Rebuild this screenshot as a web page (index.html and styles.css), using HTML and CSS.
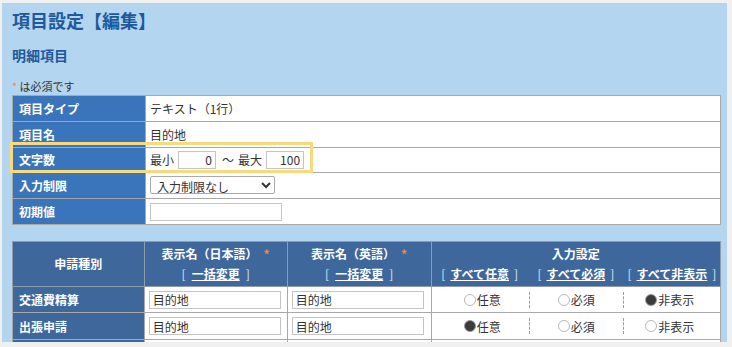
FILE: index.html
```html
<!DOCTYPE html>
<html lang="ja">
<head>
    <meta charset="UTF-8">
    <title>項目設定【編集】</title>
    <link rel="stylesheet" href="styles.css">
</head>
<body>
    <div class="page">
        <h1>項目設定【編集】</h1>
        <h2>明細項目</h2>
        <p class="note"><span class="req">*</span> は必須です</p>

        <div class="detail-wrap">
            <table class="detail">
                <tr>
                    <th>項目タイプ</th>
                    <td>テキスト（1行）</td>
                </tr>
                <tr>
                    <th>項目名</th>
                    <td>目的地</td>
                </tr>
                <tr>
                    <th>文字数</th>
                    <td>
                        <div class="range">
                            <span>最小</span>
                            <input type="text" class="num" value="0">
                            <span>〜</span>
                            <span>最大</span>
                            <input type="text" class="num" value="100">
                        </div>
                    </td>
                </tr>
                <tr>
                    <th>入力制限</th>
                    <td>
                        <select class="limit">
                            <option>入力制限なし</option>
                        </select>
                    </td>
                </tr>
                <tr>
                    <th>初期値</th>
                    <td><input type="text" class="text-field"></td>
                </tr>
            </table>
            <span class="highlight"></span>
        </div>

        <table class="apply">
            <colgroup>
                <col class="c-kind">
                <col class="c-ja">
                <col class="c-en">
                <col class="c-set">
            </colgroup>
            <thead>
                <tr>
                    <th class="center">申請種別</th>
                    <th class="center">
                        <div>表示名（日本語）<span class="req">*</span></div>
                        <div class="bulk">[<a href="#">一括変更</a>]</div>
                    </th>
                    <th class="center">
                        <div>表示名（英語）<span class="req">*</span></div>
                        <div class="bulk">[<a href="#">一括変更</a>]</div>
                    </th>
                    <th class="center">
                        <div>入力設定</div>
                        <div class="bulk-row">
                            <span class="bulk">[<a href="#">すべて任意</a>]</span>
                            <span class="bulk">[<a href="#">すべて必須</a>]</span>
                            <span class="bulk">[<a href="#">すべて非表示</a>]</span>
                        </div>
                    </th>
                </tr>
            </thead>
            <tbody>
                <tr>
                    <th>交通費精算</th>
                    <td><input type="text" class="name-field" value="目的地"></td>
                    <td><input type="text" class="name-field" value="目的地"></td>
                    <td>
                        <div class="radios">
                            <label><input type="radio" name="r1">任意</label>
                            <label><input type="radio" name="r1">必須</label>
                            <label><input type="radio" name="r1" checked>非表示</label>
                        </div>
                    </td>
                </tr>
                <tr>
                    <th>出張申請</th>
                    <td><input type="text" class="name-field" value="目的地"></td>
                    <td><input type="text" class="name-field" value="目的地"></td>
                    <td>
                        <div class="radios">
                            <label><input type="radio" name="r2" checked>任意</label>
                            <label><input type="radio" name="r2">必須</label>
                            <label><input type="radio" name="r2">非表示</label>
                        </div>
                    </td>
                </tr>
                <tr class="more">
                    <th></th>
                    <td></td>
                    <td></td>
                    <td></td>
                </tr>
            </tbody>
        </table>
    </div>
</body>
</html>
```

FILE: styles.css
```css
html, body {
    margin: 0;
    padding: 0;
}
body {
    background-color: #f0f0f0;
    font-family: "Noto Sans CJK JP", "Noto Sans", sans-serif;
    font-size: 12px;
    color: #333;
    overflow: hidden;
}
.page {
    margin: 3px 5px 0 2px;
    height: 339px;
    padding: 0 6px 0 10px;
    background-color: #b4d5ef;
    overflow: hidden;
}
h1 {
    margin: 0;
    padding-top: 5px;
    font-size: 18px;
    line-height: 24px;
    color: #1d5a9d;
}
h2 {
    margin: 13px 0 0;
    font-size: 14px;
    line-height: 20px;
    color: #1d5a9d;
}
.note {
    margin: 14px 0 0;
    font-size: 11px;
    line-height: 14px;
    color: #333;
}
.req {
    color: #f08a3c;
    margin-left: 6px;
}
.note .req {
    margin: 0;
}

/* top table */
.detail-wrap {
    position: relative;
    margin-top: 2px;
}
table {
    border-collapse: collapse;
    width: 709px;
    background-color: #fff;
}
.detail th, .detail td {
    border: 1px solid #a8a8a8;
    height: 24.8px;
    padding: 0;
    text-align: left;
}
.detail th {
    width: 126px;
    padding-left: 6px;
    background-color: #3a75bc;
    color: #fff;
    font-weight: bold;
}
.detail td {
    padding-left: 4px;
}
.range {
    display: flex;
    align-items: center;
    gap: 4px;
}
.range .num {
    width: 38px;
    margin-right: 2px;
    text-align: right;
}
input[type="text"], select {
    box-sizing: border-box;
    height: 18px;
    padding: 0 3px;
    border: 1px solid #c4c4c4;
    font-family: inherit;
    font-size: 12px;
    color: #333;
    background-color: #fff;
}
.limit {
    width: 125px;
    height: 18px;
    padding: 0 2px;
    border-color: #aaa;
    border-radius: 2px;
}
.text-field {
    width: 132px;
}
.highlight {
    position: absolute;
    left: -2px;
    top: 47px;
    width: 297px;
    height: 25px;
    border: 3px solid #f7da7e;
}

/* bottom table */
.apply {
    margin-top: 16px;
}
.c-kind { width: 132px; }
.c-ja { width: 143px; }
.c-en { width: 144px; }
.c-set { width: 290px; }
.apply th, .apply td {
    border: 1px solid #a8a8a8;
    height: 25.5px;
    padding: 0 4px;
    text-align: left;
}
.apply th {
    padding-left: 6px;
    background-color: #3e679b;
    color: #fff;
    font-weight: bold;
}
.apply thead th {
    height: 44px;
    border-color: #8d9bad;
    line-height: 20px;
}
.apply th.center {
    text-align: center;
    padding: 0;
}
.bulk {
    font-weight: normal;
    color: #dfe6ef;
}
.bulk a {
    margin: 0 6px;
    color: #fff;
    font-weight: bold;
    text-decoration: underline;
}
.bulk-row {
    display: grid;
    grid-template-columns: repeat(3, 1fr);
}
.bulk-row .bulk a {
    margin: 0 5px;
}
.name-field {
    width: 132px;
    height: 17px;
}
.radios {
    display: grid;
    grid-template-columns: repeat(3, 1fr);
    align-items: center;
}
.radios label {
    display: flex;
    align-items: center;
    justify-content: center;
    height: 16px;
    color: #333;
}
.radios label + label {
    border-left: 1px dashed #9a9a9a;
}
.radios input {
    appearance: none;
    width: 12px;
    height: 12px;
    margin: 0 1px 0 0;
    border: 1px solid #b8b8b8;
    border-radius: 50%;
    background-color: #fff;
}
.radios input:checked {
    background-color: #3b3b3b;
    border-color: #9a9a9a;
}
```
